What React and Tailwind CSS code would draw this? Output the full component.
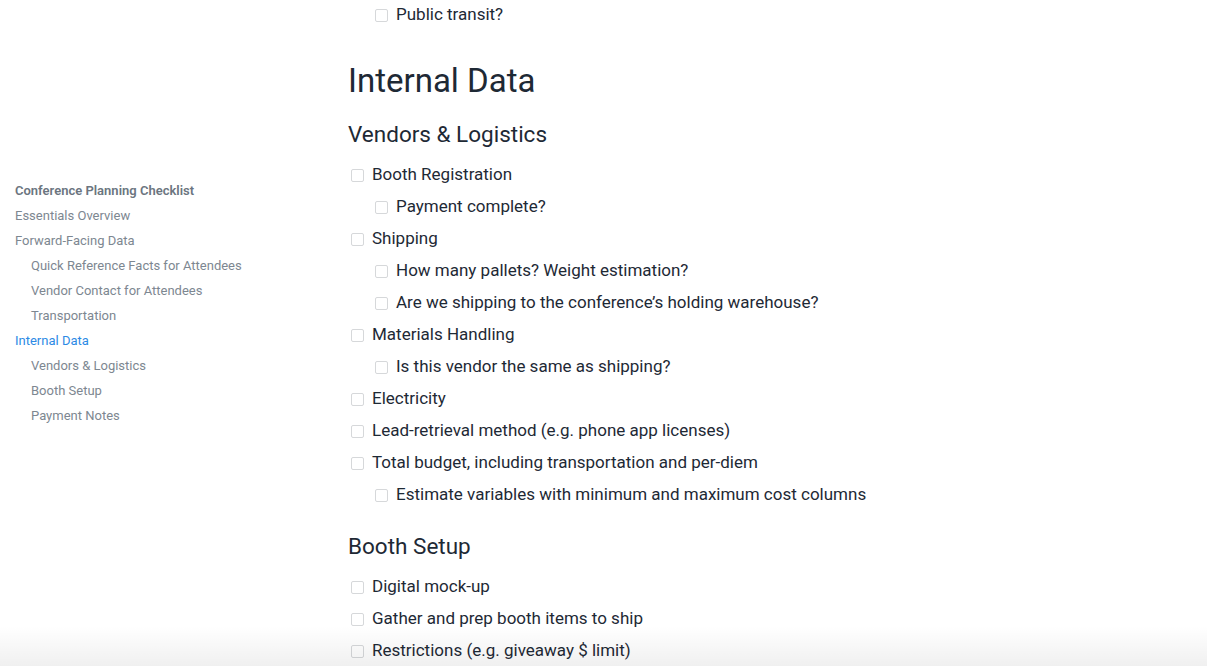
import { useState } from 'react';

const sidebar = [
  { label: 'Conference Planning Checklist', level: 0, title: true },
  { label: 'Essentials Overview', level: 0 },
  { label: 'Forward-Facing Data', level: 0 },
  { label: 'Quick Reference Facts for Attendees', level: 1 },
  { label: 'Vendor Contact for Attendees', level: 1 },
  { label: 'Transportation', level: 1 },
  { label: 'Internal Data', level: 0, active: true },
  { label: 'Vendors & Logistics', level: 1 },
  { label: 'Booth Setup', level: 1 },
  { label: 'Payment Notes', level: 1 },
];

const vendors = [
  { text: 'Booth Registration', level: 0 },
  { text: 'Payment complete?', level: 1 },
  { text: 'Shipping', level: 0 },
  { text: 'How many pallets? Weight estimation?', level: 1 },
  { text: 'Are we shipping to the conference’s holding warehouse?', level: 1 },
  { text: 'Materials Handling', level: 0 },
  { text: 'Is this vendor the same as shipping?', level: 1 },
  { text: 'Electricity', level: 0 },
  { text: 'Lead-retrieval method (e.g. phone app licenses)', level: 0 },
  { text: 'Total budget, including transportation and per-diem', level: 0 },
  { text: 'Estimate variables with minimum and maximum cost columns', level: 1 },
];

const booth = [
  { text: 'Digital mock-up', level: 0 },
  { text: 'Gather and prep booth items to ship', level: 0 },
  { text: 'Restrictions (e.g. giveaway $ limit)', level: 0 },
];

function CheckItem({ text, level }) {
  const [checked, setChecked] = useState(false);
  return (
    <div className={'flex items-center h-8 ' + (level ? 'pl-[27px]' : 'pl-[3px]')}>
      <button
        type="button"
        onClick={() => setChecked(!checked)}
        className={'w-[13px] h-[13px] rounded-[2px] border border-[#d6d8da] mr-[8px] shrink-0 ' + (checked ? 'bg-[#2d8ae5]' : 'bg-white')}
      />
      <span className={'text-[17px] text-[#1e2935] ' + (checked ? 'line-through text-gray-400' : '')}>{text}</span>
    </div>
  );
}

export default function App() {
  return (
    <div className="relative h-[666px] overflow-hidden bg-white flex font-['Roboto',sans-serif]">
      <aside className="w-[348px] shrink-0 pl-[15px] pt-[178px]">
        {sidebar.map((s) => (
          <div
            key={s.label}
            className={
              'h-[25px] leading-[25px] text-[13px] ' +
              (s.level ? 'pl-4 ' : '') +
              (s.title ? 'font-semibold text-[#6b7580] ' : s.active ? 'text-[#2d8ae5] ' : 'text-[#7d8791] ')
            }
          >
            {s.label}
          </div>
        ))}
      </aside>

      <main className="flex-1 pt-px">
        <div className="flex items-center h-7 pl-[27px]">
          <span className="w-[13px] h-[13px] rounded-[2px] border border-[#d6d8da] mr-[8px]" />
          <span className="text-[17px] text-[#1e2935]">Public transit?</span>
        </div>

        <h1 className="mt-8 text-[33px] leading-[40px] text-[#1e2935]">Internal Data</h1>

        <h2 className="mt-[18px] text-[22.5px] leading-[30px] text-[#1e2935]">Vendors &amp; Logistics</h2>
        <div className="mt-[10px]">
          {vendors.map((v) => (
            <CheckItem key={v.text} {...v} />
          ))}
        </div>

        <h2 className="mt-5 text-[22.5px] leading-[30px] text-[#1e2935]">Booth Setup</h2>
        <div className="mt-[10px]">
          {booth.map((v) => (
            <CheckItem key={v.text} {...v} />
          ))}
        </div>
      </main>

      <div className="pointer-events-none absolute left-0 right-0 bottom-0 h-[40px] bg-gradient-to-b from-transparent to-black/[0.06]" />
    </div>
  );
}
